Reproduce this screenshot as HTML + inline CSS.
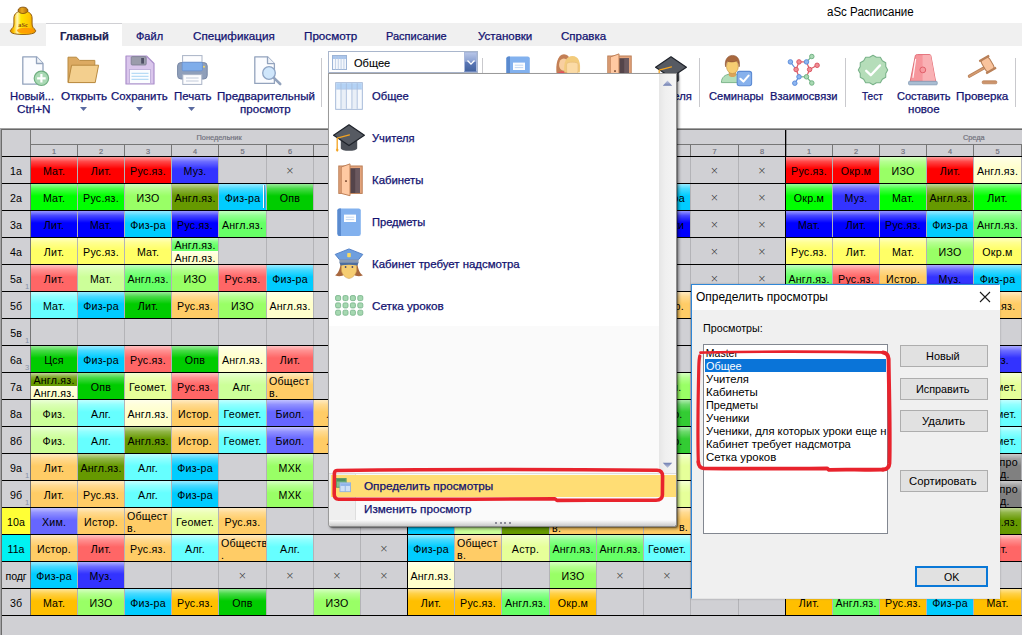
<!DOCTYPE html>
<html lang="ru"><head><meta charset="utf-8"><title>aSc Расписание</title>
<style>

html,body{margin:0;padding:0}
body{width:1022px;height:635px;overflow:hidden;position:relative;background:#d0d0d4;font-family:"Liberation Sans", sans-serif;}
.a{position:absolute}
.t{position:absolute;white-space:nowrap;transform-origin:0 50%;-webkit-text-stroke:.25px currentColor}
#grid{position:absolute;left:0;top:0;width:1022px;height:635px;font-size:10.67px;color:#000}
.c{position:absolute;height:26px;line-height:29px;letter-spacing:.22px;text-align:center;white-space:nowrap;overflow:hidden;
   background-image:linear-gradient(to bottom,rgba(255,255,255,.6) 0,rgba(255,255,255,.28) 18%,rgba(255,255,255,0) 46%);}
.c.l{text-align:left;line-height:12px;padding-left:2px;box-sizing:border-box}
.c.l span{display:block;position:relative;top:2px}
.h{position:absolute;height:13px;line-height:15px;letter-spacing:.22px;text-align:center;overflow:hidden;
   background-image:linear-gradient(to bottom,rgba(255,255,255,.6) 0,rgba(255,255,255,.2) 30%,rgba(255,255,255,0) 60%);}
.x{position:absolute;height:26px;line-height:27px;overflow:hidden;text-align:center;font-family:"DejaVu Sans Light","DejaVu Sans",sans-serif;font-weight:200;font-size:10.5px;color:#303030}
.rh{position:absolute;left:2px;width:28px;height:26px;line-height:28px;text-align:center}
.hl{position:absolute;height:1px;background:#000}
.vl{position:absolute;width:1px;background:#b3b3b7}
.sep{position:absolute;width:1px;background:#c9c9cd;top:58px;height:49px}
.btn{position:absolute;box-sizing:border-box;border:1px solid #adadad;background:#e1e1e1}

</style></head><body>
<div id="grid">
<div class="a" style="left:0;top:128px;width:1022px;height:1px;background:#a2a2a2"></div>
<div class="a" style="left:0;top:129px;width:1022px;height:1px;background:#696969"></div>
<div class="a" style="left:1px;top:128px;width:1px;height:506px;background:#6c6c6c;top:129px"></div>
<div class="a" style="left:0;top:128px;width:1px;height:507px;background:#a4a4a6"></div>
<div class="a" style="left:30px;top:144px;width:1022px;height:1px;background:#767676"></div>
<div class="vl" style="left:30px;top:130px;height:485px;background:#767676"></div>
<div class="vl" style="left:77px;top:145px;height:11px;background:#767676"></div>
<div class="vl" style="left:77px;top:157px;height:458px"></div>
<div class="vl" style="left:124px;top:145px;height:11px;background:#767676"></div>
<div class="vl" style="left:124px;top:157px;height:458px"></div>
<div class="vl" style="left:171px;top:145px;height:11px;background:#767676"></div>
<div class="vl" style="left:171px;top:157px;height:458px"></div>
<div class="vl" style="left:218px;top:145px;height:11px;background:#767676"></div>
<div class="vl" style="left:218px;top:157px;height:458px"></div>
<div class="vl" style="left:266px;top:145px;height:11px;background:#767676"></div>
<div class="vl" style="left:266px;top:157px;height:458px"></div>
<div class="vl" style="left:313px;top:145px;height:11px;background:#767676"></div>
<div class="vl" style="left:313px;top:157px;height:458px"></div>
<div class="vl" style="left:360px;top:145px;height:11px;background:#767676"></div>
<div class="vl" style="left:360px;top:157px;height:458px"></div>
<div class="a" style="left:407px;top:130px;width:1px;height:485px;background:#000"></div>
<div class="a" style="left:408px;top:130px;width:1px;height:485px;background:rgba(0,0,0,.3)"></div>
<div class="vl" style="left:454px;top:145px;height:11px;background:#767676"></div>
<div class="vl" style="left:454px;top:157px;height:458px"></div>
<div class="vl" style="left:501px;top:145px;height:11px;background:#767676"></div>
<div class="vl" style="left:501px;top:157px;height:458px"></div>
<div class="vl" style="left:549px;top:145px;height:11px;background:#767676"></div>
<div class="vl" style="left:549px;top:157px;height:458px"></div>
<div class="vl" style="left:596px;top:145px;height:11px;background:#767676"></div>
<div class="vl" style="left:596px;top:157px;height:458px"></div>
<div class="vl" style="left:643px;top:145px;height:11px;background:#767676"></div>
<div class="vl" style="left:643px;top:157px;height:458px"></div>
<div class="vl" style="left:690px;top:145px;height:11px;background:#767676"></div>
<div class="vl" style="left:690px;top:157px;height:458px"></div>
<div class="vl" style="left:738px;top:145px;height:11px;background:#767676"></div>
<div class="vl" style="left:738px;top:157px;height:458px"></div>
<div class="a" style="left:785px;top:130px;width:1px;height:485px;background:#000"></div>
<div class="a" style="left:786px;top:130px;width:1px;height:485px;background:rgba(0,0,0,.3)"></div>
<div class="vl" style="left:832px;top:145px;height:11px;background:#767676"></div>
<div class="vl" style="left:832px;top:157px;height:458px"></div>
<div class="vl" style="left:879px;top:145px;height:11px;background:#767676"></div>
<div class="vl" style="left:879px;top:157px;height:458px"></div>
<div class="vl" style="left:926px;top:145px;height:11px;background:#767676"></div>
<div class="vl" style="left:926px;top:157px;height:458px"></div>
<div class="vl" style="left:973px;top:145px;height:11px;background:#767676"></div>
<div class="vl" style="left:973px;top:157px;height:458px"></div>
<div class="vl" style="left:1021px;top:145px;height:11px;background:#767676"></div>
<div class="vl" style="left:1021px;top:157px;height:458px"></div>
<div class="hl" style="left:2px;top:156px;width:1022px"></div>
<div class="hl" style="left:2px;top:183px;width:1022px"></div>
<div class="hl" style="left:2px;top:210px;width:1022px"></div>
<div class="hl" style="left:2px;top:237px;width:1022px"></div>
<div class="hl" style="left:2px;top:264px;width:1022px"></div>
<div class="hl" style="left:2px;top:291px;width:1022px"></div>
<div class="hl" style="left:2px;top:318px;width:1022px"></div>
<div class="hl" style="left:2px;top:345px;width:1022px"></div>
<div class="hl" style="left:2px;top:372px;width:1022px"></div>
<div class="hl" style="left:2px;top:399px;width:1022px"></div>
<div class="hl" style="left:2px;top:426px;width:1022px"></div>
<div class="hl" style="left:2px;top:453px;width:1022px"></div>
<div class="hl" style="left:2px;top:480px;width:1022px"></div>
<div class="hl" style="left:2px;top:507px;width:1022px"></div>
<div class="hl" style="left:2px;top:534px;width:1022px"></div>
<div class="hl" style="left:2px;top:561px;width:1022px"></div>
<div class="hl" style="left:2px;top:588px;width:1022px"></div>
<div class="hl" style="left:2px;top:615px;width:1022px"></div>
<div class="rh" style="top:157px;">1а</div>
<div class="rh" style="top:184px;">2а</div>
<div class="rh" style="top:211px;">3а</div>
<div class="rh" style="top:238px;">4а</div>
<div class="rh" style="top:265px;">5а</div>
<div class="rh" style="top:292px;">5б</div>
<div class="rh" style="top:319px;">5в</div>
<div class="rh" style="top:346px;">6а</div>
<div class="rh" style="top:373px;">7а</div>
<div class="rh" style="top:400px;">8а</div>
<div class="rh" style="top:427px;">8б</div>
<div class="rh" style="top:454px;">9а</div>
<div class="rh" style="top:481px;">9б</div>
<div class="rh" style="top:508px;background:#ffff36;">10а</div>
<div class="rh" style="top:535px;background:#00f2f2;">11а</div>
<div class="rh" style="top:562px;letter-spacing:-.2px;">подг</div>
<div class="rh" style="top:589px;">3б</div>
<div class="a" style="left:25px;top:282px;font-size:7.6px;line-height:9px;color:#8790a6">1</div>
<div class="a" style="left:25px;top:336px;font-size:7.6px;line-height:9px;color:#8790a6">1</div>
<div class="a" style="left:25px;top:471px;font-size:7.6px;line-height:9px;color:#8790a6">1</div>
<div class="a" style="left:25px;top:498px;font-size:7.6px;line-height:9px;color:#8790a6">1</div>
<div class="a" style="left:25px;top:363px;font-size:7.6px;line-height:9px;color:#8790a6">3</div>
<div class="a" style="left:179.1px;width:80px;top:133px;text-align:center;font-size:7.4px;line-height:9px;color:#72727e;-webkit-text-stroke:.2px #72727e">Понедельник</div>
<div class="a" style="left:31px;width:46px;top:147px;text-align:center;font-size:7.4px;line-height:9px;color:#72727e;-webkit-text-stroke:.2px #72727e">1</div>
<div class="a" style="left:78px;width:46px;top:147px;text-align:center;font-size:7.4px;line-height:9px;color:#72727e;-webkit-text-stroke:.2px #72727e">2</div>
<div class="a" style="left:125px;width:46px;top:147px;text-align:center;font-size:7.4px;line-height:9px;color:#72727e;-webkit-text-stroke:.2px #72727e">3</div>
<div class="a" style="left:172px;width:46px;top:147px;text-align:center;font-size:7.4px;line-height:9px;color:#72727e;-webkit-text-stroke:.2px #72727e">4</div>
<div class="a" style="left:219px;width:47px;top:147px;text-align:center;font-size:7.4px;line-height:9px;color:#72727e;-webkit-text-stroke:.2px #72727e">5</div>
<div class="a" style="left:267px;width:46px;top:147px;text-align:center;font-size:7.4px;line-height:9px;color:#72727e;-webkit-text-stroke:.2px #72727e">6</div>
<div class="a" style="left:314px;width:46px;top:147px;text-align:center;font-size:7.4px;line-height:9px;color:#72727e;-webkit-text-stroke:.2px #72727e">7</div>
<div class="a" style="left:361px;width:46px;top:147px;text-align:center;font-size:7.4px;line-height:9px;color:#72727e;-webkit-text-stroke:.2px #72727e">8</div>
<div class="a" style="left:556.4px;width:80px;top:133px;text-align:center;font-size:7.4px;line-height:9px;color:#72727e;-webkit-text-stroke:.2px #72727e">Вторник</div>
<div class="a" style="left:408px;width:46px;top:147px;text-align:center;font-size:7.4px;line-height:9px;color:#72727e;-webkit-text-stroke:.2px #72727e">1</div>
<div class="a" style="left:455px;width:46px;top:147px;text-align:center;font-size:7.4px;line-height:9px;color:#72727e;-webkit-text-stroke:.2px #72727e">2</div>
<div class="a" style="left:502px;width:47px;top:147px;text-align:center;font-size:7.4px;line-height:9px;color:#72727e;-webkit-text-stroke:.2px #72727e">3</div>
<div class="a" style="left:550px;width:46px;top:147px;text-align:center;font-size:7.4px;line-height:9px;color:#72727e;-webkit-text-stroke:.2px #72727e">4</div>
<div class="a" style="left:597px;width:46px;top:147px;text-align:center;font-size:7.4px;line-height:9px;color:#72727e;-webkit-text-stroke:.2px #72727e">5</div>
<div class="a" style="left:644px;width:46px;top:147px;text-align:center;font-size:7.4px;line-height:9px;color:#72727e;-webkit-text-stroke:.2px #72727e">6</div>
<div class="a" style="left:691px;width:47px;top:147px;text-align:center;font-size:7.4px;line-height:9px;color:#72727e;-webkit-text-stroke:.2px #72727e">7</div>
<div class="a" style="left:739px;width:46px;top:147px;text-align:center;font-size:7.4px;line-height:9px;color:#72727e;-webkit-text-stroke:.2px #72727e">8</div>
<div class="a" style="left:933.8px;width:80px;top:133px;text-align:center;font-size:7.4px;line-height:9px;color:#72727e;-webkit-text-stroke:.2px #72727e">Среда</div>
<div class="a" style="left:786px;width:46px;top:147px;text-align:center;font-size:7.4px;line-height:9px;color:#72727e;-webkit-text-stroke:.2px #72727e">1</div>
<div class="a" style="left:833px;width:46px;top:147px;text-align:center;font-size:7.4px;line-height:9px;color:#72727e;-webkit-text-stroke:.2px #72727e">2</div>
<div class="a" style="left:880px;width:46px;top:147px;text-align:center;font-size:7.4px;line-height:9px;color:#72727e;-webkit-text-stroke:.2px #72727e">3</div>
<div class="a" style="left:927px;width:46px;top:147px;text-align:center;font-size:7.4px;line-height:9px;color:#72727e;-webkit-text-stroke:.2px #72727e">4</div>
<div class="a" style="left:974px;width:47px;top:147px;text-align:center;font-size:7.4px;line-height:9px;color:#72727e;-webkit-text-stroke:.2px #72727e">5</div>
<div class="c" style="left:31px;top:157px;width:46px;background-color:#ff0000">Мат.</div>
<div class="c" style="left:78px;top:157px;width:46px;background-color:#ff0000">Лит.</div>
<div class="c" style="left:125px;top:157px;width:46px;background-color:#ff0000">Рус.яз.</div>
<div class="c" style="left:172px;top:157px;width:46px;background-color:#3333ff">Муз.</div>
<div class="x" style="left:267px;top:157px;width:46px">×</div>
<div class="x" style="left:691px;top:157px;width:47px">×</div>
<div class="x" style="left:739px;top:157px;width:46px">×</div>
<div class="c" style="left:786px;top:157px;width:46px;background-color:#ff0000">Рус.яз.</div>
<div class="c" style="left:833px;top:157px;width:46px;background-color:#ff0000">Окр.м</div>
<div class="c" style="left:880px;top:157px;width:46px;background-color:#99ff66">ИЗО</div>
<div class="c" style="left:927px;top:157px;width:46px;background-color:#ff0000">Лит.</div>
<div class="c" style="left:974px;top:157px;width:47px;background-color:#ffffcc">Англ.яз.</div>
<div class="c" style="left:31px;top:184px;width:46px;background-color:#00ff00">Мат.</div>
<div class="c" style="left:78px;top:184px;width:46px;background-color:#00ff00">Рус.яз.</div>
<div class="c" style="left:125px;top:184px;width:46px;background-color:#99ff66">ИЗО</div>
<div class="c" style="left:172px;top:184px;width:46px;background-color:#669900">Англ.яз.</div>
<div class="c" style="left:219px;top:184px;width:47px;background-color:#00ccff">Физ-ра</div>
<div class="c" style="left:267px;top:184px;width:46px;background-color:#00cc00">Опв</div>
<div class="c" style="left:644px;top:184px;width:46px;background-color:#00ccff">Физ-ра</div>
<div class="x" style="left:691px;top:184px;width:47px">×</div>
<div class="x" style="left:739px;top:184px;width:46px">×</div>
<div class="c" style="left:786px;top:184px;width:46px;background-color:#00ff00">Окр.м</div>
<div class="c" style="left:833px;top:184px;width:46px;background-color:#3333ff">Муз.</div>
<div class="c" style="left:880px;top:184px;width:46px;background-color:#00ff00">Мат.</div>
<div class="c" style="left:927px;top:184px;width:46px;background-color:#669900">Англ.яз.</div>
<div class="c" style="left:974px;top:184px;width:47px;background-color:#00ff00">Лит.</div>
<div class="c" style="left:31px;top:211px;width:46px;background-color:#0000ff">Лит.</div>
<div class="c" style="left:78px;top:211px;width:46px;background-color:#0000ff">Мат.</div>
<div class="c" style="left:125px;top:211px;width:46px;background-color:#00ccff">Физ-ра</div>
<div class="c" style="left:172px;top:211px;width:46px;background-color:#0000ff">Рус.яз.</div>
<div class="c" style="left:219px;top:211px;width:47px;background-color:#66ff66">Англ.яз.</div>
<div class="c" style="left:644px;top:211px;width:46px;background-color:#0000ff">Физ-ки</div>
<div class="x" style="left:691px;top:211px;width:47px">×</div>
<div class="x" style="left:739px;top:211px;width:46px">×</div>
<div class="c" style="left:786px;top:211px;width:46px;background-color:#0000ff">Мат.</div>
<div class="c" style="left:833px;top:211px;width:46px;background-color:#0000ff">Лит.</div>
<div class="c" style="left:880px;top:211px;width:46px;background-color:#0000ff">Рус.яз.</div>
<div class="c" style="left:927px;top:211px;width:46px;background-color:#00ccff">Физ-ра</div>
<div class="c" style="left:974px;top:211px;width:47px;background-color:#66ff66">Англ.яз.</div>
<div class="c" style="left:31px;top:238px;width:46px;background-color:#ffff66">Лит.</div>
<div class="c" style="left:78px;top:238px;width:46px;background-color:#ffff66">Рус.яз.</div>
<div class="c" style="left:125px;top:238px;width:46px;background-color:#ffff66">Мат.</div>
<div class="h" style="left:172px;top:238px;width:46px;background-color:#66ff66">Англ.яз.</div>
<div class="h" style="left:172px;top:251px;width:46px;background-color:#ffffcc">Англ.яз.</div>
<div class="x" style="left:691px;top:238px;width:47px">×</div>
<div class="x" style="left:739px;top:238px;width:46px">×</div>
<div class="c" style="left:786px;top:238px;width:46px;background-color:#ffff66">Рус.яз.</div>
<div class="c" style="left:833px;top:238px;width:46px;background-color:#ffff66">Лит.</div>
<div class="c" style="left:880px;top:238px;width:46px;background-color:#ffff66">Мат.</div>
<div class="c" style="left:927px;top:238px;width:46px;background-color:#99ff66">ИЗО</div>
<div class="c" style="left:974px;top:238px;width:47px;background-color:#ffff66">Окр.м</div>
<div class="c" style="left:31px;top:265px;width:46px;background-color:#ff6666">Лит.</div>
<div class="c" style="left:78px;top:265px;width:46px;background-color:#ccff99">Мат.</div>
<div class="c" style="left:125px;top:265px;width:46px;background-color:#66ff66">Англ.яз.</div>
<div class="c" style="left:172px;top:265px;width:46px;background-color:#99ff66">ИЗО</div>
<div class="c" style="left:219px;top:265px;width:47px;background-color:#ff6666">Рус.яз.</div>
<div class="c" style="left:267px;top:265px;width:46px;background-color:#00ccff">Физ-ра</div>
<div class="x" style="left:691px;top:265px;width:47px">×</div>
<div class="x" style="left:739px;top:265px;width:46px">×</div>
<div class="c" style="left:786px;top:265px;width:46px;background-color:#66ff66">Англ.яз.</div>
<div class="c" style="left:833px;top:265px;width:46px;background-color:#ff6666">Рус.яз.</div>
<div class="c" style="left:880px;top:265px;width:46px;background-color:#ffcc66">Истор.</div>
<div class="c" style="left:927px;top:265px;width:46px;background-color:#3333ff">Муз.</div>
<div class="c" style="left:974px;top:265px;width:47px;background-color:#00ccff">Физ-ра</div>
<div class="c" style="left:31px;top:292px;width:46px;background-color:#66ffff">Мат.</div>
<div class="c" style="left:78px;top:292px;width:46px;background-color:#00ccff">Физ-ра</div>
<div class="c" style="left:125px;top:292px;width:46px;background-color:#00cc00">Лит.</div>
<div class="c" style="left:172px;top:292px;width:46px;background-color:#ffcc66">Рус.яз.</div>
<div class="c" style="left:219px;top:292px;width:47px;background-color:#99ff66">ИЗО</div>
<div class="c" style="left:267px;top:292px;width:46px;background-color:#ffffcc">Англ.яз.</div>
<div class="c" style="left:644px;top:292px;width:46px;background-color:#ffcc66">Истор.</div>
<div class="c" style="left:974px;top:292px;width:47px;background-color:#ffcc66">Рус.яз.</div>
<div class="c" style="left:31px;top:346px;width:46px;background-color:#00cc00">Цся</div>
<div class="c" style="left:78px;top:346px;width:46px;background-color:#00ccff">Физ-ра</div>
<div class="c" style="left:125px;top:346px;width:46px;background-color:#ff6666">Рус.яз.</div>
<div class="c" style="left:172px;top:346px;width:46px;background-color:#00cc00">Опв</div>
<div class="c" style="left:219px;top:346px;width:47px;background-color:#ffffcc">Англ.яз.</div>
<div class="c" style="left:267px;top:346px;width:46px;background-color:#ff6666">Лит.</div>
<div class="c" style="left:974px;top:346px;width:47px;background-color:#3333ff">Муз.</div>
<div class="h" style="left:31px;top:373px;width:46px;background-color:#669900">Англ.яз.</div>
<div class="h" style="left:31px;top:386px;width:46px;background-color:#ffffcc">Англ.яз.</div>
<div class="c" style="left:78px;top:373px;width:46px;background-color:#00cc00">Опв</div>
<div class="c" style="left:125px;top:373px;width:46px;background-color:#e6ff99">Геомет.</div>
<div class="c" style="left:172px;top:373px;width:46px;background-color:#ff6666">Рус.яз.</div>
<div class="c" style="left:219px;top:373px;width:47px;background-color:#ccff99">Алг.</div>
<div class="c l" style="left:267px;top:373px;width:46px;background-color:#ffcc66"><span>Общест<br>в.</span></div>
<div class="c" style="left:644px;top:373px;width:46px;background-color:#99ff66">Биол.</div>
<div class="c" style="left:974px;top:373px;width:47px;background-color:#e6ff99">Геомет.</div>
<div class="c" style="left:31px;top:400px;width:46px;background-color:#ccff99">Физ.</div>
<div class="c" style="left:78px;top:400px;width:46px;background-color:#66ffff">Алг.</div>
<div class="c" style="left:125px;top:400px;width:46px;background-color:#ffffcc">Англ.яз.</div>
<div class="c" style="left:172px;top:400px;width:46px;background-color:#ffcc66">Истор.</div>
<div class="c" style="left:219px;top:400px;width:47px;background-color:#66ffff">Геомет.</div>
<div class="c" style="left:267px;top:400px;width:46px;background-color:#6666ff">Биол.</div>
<div class="c" style="left:314px;top:400px;width:46px;background-color:#ffcc66">Лит.</div>
<div class="c" style="left:644px;top:400px;width:46px;background-color:#33cc33">Геогр.</div>
<div class="c" style="left:974px;top:400px;width:47px;background-color:#66ffff">Геомет.</div>
<div class="c" style="left:31px;top:427px;width:46px;background-color:#ccff99">Физ.</div>
<div class="c" style="left:78px;top:427px;width:46px;background-color:#66ffff">Алг.</div>
<div class="c" style="left:125px;top:427px;width:46px;background-color:#669900">Англ.яз.</div>
<div class="c" style="left:172px;top:427px;width:46px;background-color:#ffcc66">Истор.</div>
<div class="c" style="left:219px;top:427px;width:47px;background-color:#66ffff">Геомет.</div>
<div class="c" style="left:267px;top:427px;width:46px;background-color:#6666ff">Биол.</div>
<div class="c" style="left:314px;top:427px;width:46px;background-color:#ffcc66">Лит.</div>
<div class="c" style="left:644px;top:427px;width:46px;background-color:#33cc33">Геогр.</div>
<div class="c" style="left:974px;top:427px;width:47px;background-color:#66ffff">Геомет.</div>
<div class="c" style="left:31px;top:454px;width:46px;background-color:#ffcc66">Лит.</div>
<div class="c" style="left:78px;top:454px;width:46px;background-color:#669900">Англ.яз.</div>
<div class="c" style="left:125px;top:454px;width:46px;background-color:#66ffff">Алг.</div>
<div class="c" style="left:172px;top:454px;width:46px;background-color:#00ccff">Физ-ра</div>
<div class="c" style="left:267px;top:454px;width:46px;background-color:#99ff66">МХК</div>
<div class="c" style="left:644px;top:454px;width:46px;background-color:#e6ff99"></div>
<div class="c l" style="left:974px;top:454px;width:47px;background-color:#808080"><span>Инд,про<br><i style="font-style:normal;padding-left:24px">д.</i></span></div>
<div class="c" style="left:31px;top:481px;width:46px;background-color:#ffcc66">Лит.</div>
<div class="c" style="left:78px;top:481px;width:46px;background-color:#ffcc66">Рус.яз.</div>
<div class="c" style="left:125px;top:481px;width:46px;background-color:#66ffff">Алг.</div>
<div class="c" style="left:172px;top:481px;width:46px;background-color:#00ccff">Физ-ра</div>
<div class="c" style="left:267px;top:481px;width:46px;background-color:#99ff66">МХК</div>
<div class="c" style="left:644px;top:481px;width:46px;background-color:#e6ff99"></div>
<div class="c l" style="left:974px;top:481px;width:47px;background-color:#808080"><span>Инд,про<br><i style="font-style:normal;padding-left:24px">д.</i></span></div>
<div class="c" style="left:31px;top:508px;width:46px;background-color:#6666ff">Хим.</div>
<div class="c" style="left:78px;top:508px;width:46px;background-color:#ffcc66">Истор.</div>
<div class="c l" style="left:125px;top:508px;width:46px;background-color:#ffcc66"><span>Общест<br>в.</span></div>
<div class="c" style="left:172px;top:508px;width:46px;background-color:#e6ff99">Геомет.</div>
<div class="c" style="left:219px;top:508px;width:47px;background-color:#ffcc66">Рус.яз.</div>
<div class="c" style="left:408px;top:508px;width:46px;background-color:#00ccff"></div>
<div class="c" style="left:455px;top:508px;width:46px;background-color:#ccff99"></div>
<div class="c" style="left:502px;top:508px;width:47px;background-color:#669900"></div>
<div class="c l" style="left:550px;top:508px;width:46px;background-color:#ffcc66"><span>Общест<br>в.</span></div>
<div class="c" style="left:597px;top:508px;width:46px;background-color:#ffcc66"></div>
<div class="c" style="left:644px;top:508px;width:46px;background-color:#ffcc66;text-align:right;padding-right:2px;box-sizing:border-box;line-height:39px">в.</div>
<div class="c" style="left:974px;top:508px;width:47px;background-color:#669900">Англ.яз.</div>
<div class="c" style="left:31px;top:535px;width:46px;background-color:#ffcc66">Истор.</div>
<div class="c" style="left:78px;top:535px;width:46px;background-color:#ff6666">Лит.</div>
<div class="c" style="left:125px;top:535px;width:46px;background-color:#ffcc66">Рус.яз.</div>
<div class="c" style="left:172px;top:535px;width:46px;background-color:#66ffff">Алг.</div>
<div class="c l" style="left:219px;top:535px;width:47px;background-color:#ffcc66"><span>Обществ<br>.</span></div>
<div class="c" style="left:267px;top:535px;width:46px;background-color:#66ffff">Алг.</div>
<div class="x" style="left:361px;top:535px;width:46px">×</div>
<div class="c" style="left:408px;top:535px;width:46px;background-color:#00ccff">Физ-ра</div>
<div class="c l" style="left:455px;top:535px;width:46px;background-color:#ffcc66"><span>Общест<br>в.</span></div>
<div class="c" style="left:502px;top:535px;width:47px;background-color:#e6ff99">Астр.</div>
<div class="c" style="left:550px;top:535px;width:46px;background-color:#66ff66">Англ.яз.</div>
<div class="c" style="left:597px;top:535px;width:46px;background-color:#66ff66">Англ.яз.</div>
<div class="c" style="left:644px;top:535px;width:46px;background-color:#66ffff">Геомет.</div>
<div class="c" style="left:974px;top:535px;width:47px;background-color:#ff6666">Лит.</div>
<div class="c" style="left:31px;top:562px;width:46px;background-color:#00ccff">Физ-ра</div>
<div class="c" style="left:78px;top:562px;width:46px;background-color:#3333ff">Муз.</div>
<div class="x" style="left:219px;top:562px;width:47px">×</div>
<div class="x" style="left:267px;top:562px;width:46px">×</div>
<div class="x" style="left:314px;top:562px;width:46px">×</div>
<div class="x" style="left:361px;top:562px;width:46px">×</div>
<div class="c" style="left:408px;top:562px;width:46px;background-color:#ffffcc">Англ.яз.</div>
<div class="c" style="left:550px;top:562px;width:46px;background-color:#99ff66">ИЗО</div>
<div class="x" style="left:597px;top:562px;width:46px">×</div>
<div class="x" style="left:644px;top:562px;width:46px">×</div>
<div class="c" style="left:31px;top:589px;width:46px;background-color:#ffbf00">Мат.</div>
<div class="c" style="left:78px;top:589px;width:46px;background-color:#99ff66">ИЗО</div>
<div class="c" style="left:125px;top:589px;width:46px;background-color:#00ccff">Физ-ра</div>
<div class="c" style="left:172px;top:589px;width:46px;background-color:#ffbf00">Рус.яз.</div>
<div class="c" style="left:219px;top:589px;width:47px;background-color:#00cc00">Опв</div>
<div class="c" style="left:314px;top:589px;width:46px;background-color:#99ff66">ИЗО</div>
<div class="c" style="left:408px;top:589px;width:46px;background-color:#ffbf00">Лит.</div>
<div class="c" style="left:455px;top:589px;width:46px;background-color:#ffbf00">Рус.яз.</div>
<div class="c" style="left:502px;top:589px;width:47px;background-color:#66ff66">Англ.яз.</div>
<div class="c" style="left:550px;top:589px;width:46px;background-color:#ffbf00">Окр.м</div>
<div class="c" style="left:786px;top:589px;width:46px;background-color:#ffbf00">Лит.</div>
<div class="c" style="left:833px;top:589px;width:46px;background-color:#66ff66">Англ.яз.</div>
<div class="c" style="left:880px;top:589px;width:46px;background-color:#ffbf00">Рус.яз.</div>
<div class="c" style="left:927px;top:589px;width:46px;background-color:#00ccff">Физ-ра</div>
<div class="c" style="left:974px;top:589px;width:47px;background-color:#ffbf00">Мат.</div>
<div class="a" style="left:263px;top:185px;width:1px;height:23px;background:#fff"></div>
<div class="a" style="left:264px;top:185px;width:1px;height:23px;background:rgba(90,110,130,.55)"></div>
</div>
<div class="a" style="left:0;top:0;width:1022px;height:23px;background:#fff"></div>
<div class="a" style="left:0;top:23px;width:1022px;height:23px;background:#f0f0f0"></div>
<div class="a" style="left:0;top:46px;width:1022px;height:82px;background:#fff"></div>
<div class="a" style="left:46px;top:23px;width:76px;height:24px;background:#fff;border-top:1px solid #d0d0d4;box-sizing:border-box"></div>
<span class="t" id="t0" style="left:827.0px;top:3.5px;font-size:12px;line-height:16px;color:#000;font-weight:normal;transform:scaleX(0.9611);-webkit-text-stroke:0;">aSc Расписание</span>
<span class="t" id="t1" style="left:60.0px;top:29.0px;font-size:11px;line-height:14px;color:#1a2050;font-weight:bold;transform:scaleX(1.0104);">Главный</span>
<span class="t" id="t2" style="left:136.0px;top:29.0px;font-size:11px;line-height:14px;color:#121270;font-weight:normal;transform:scaleX(1.0000);">Файл</span>
<span class="t" id="t3" style="left:192.5px;top:29.0px;font-size:11px;line-height:14px;color:#121270;font-weight:normal;transform:scaleX(1.0584);">Спецификация</span>
<span class="t" id="t4" style="left:303.5px;top:29.0px;font-size:11px;line-height:14px;color:#121270;font-weight:normal;transform:scaleX(1.0600);">Просмотр</span>
<span class="t" id="t5" style="left:386.0px;top:29.0px;font-size:11px;line-height:14px;color:#121270;font-weight:normal;transform:scaleX(1.0000);">Расписание</span>
<span class="t" id="t6" style="left:477.5px;top:29.0px;font-size:11px;line-height:14px;color:#121270;font-weight:normal;transform:scaleX(1.0481);">Установки</span>
<span class="t" id="t7" style="left:561.0px;top:29.0px;font-size:11px;line-height:14px;color:#121270;font-weight:normal;transform:scaleX(1.0465);">Справка</span>
<span class="t" id="t8" style="left:10.0px;top:89.0px;font-size:11px;line-height:14px;color:#121270;font-weight:normal;transform:scaleX(1.0233);">Новый...</span>
<span class="t" id="t9" style="left:17.0px;top:102.0px;font-size:11px;line-height:14px;color:#121270;font-weight:normal;transform:scaleX(1.0645);">Ctrl+N</span>
<span class="t" id="t10" style="left:60.5px;top:89.0px;font-size:11px;line-height:14px;color:#121270;font-weight:normal;transform:scaleX(1.0698);">Открыть</span>
<span class="t" id="t11" style="left:111.0px;top:89.0px;font-size:11px;line-height:14px;color:#121270;font-weight:normal;transform:scaleX(1.0364);">Сохранить</span>
<span class="t" id="t12" style="left:173.5px;top:89.0px;font-size:11px;line-height:14px;color:#121270;font-weight:normal;transform:scaleX(1.0417);">Печать</span>
<span class="t" id="t13" style="left:216.5px;top:89.0px;font-size:11px;line-height:14px;color:#121270;font-weight:normal;transform:scaleX(1.0484);">Предварительный</span>
<span class="t" id="t14" style="left:240.0px;top:102.0px;font-size:11px;line-height:14px;color:#121270;font-weight:normal;transform:scaleX(1.0521);">просмотр</span>
<span class="t" id="t15" style="left:649.0px;top:89.0px;font-size:11px;line-height:14px;color:#121270;font-weight:normal;transform:scaleX(1.0238);">Учителя</span>
<span class="t" id="t16" style="left:708.7px;top:89.0px;font-size:11px;line-height:14px;color:#121270;font-weight:normal;transform:scaleX(1.0111);">Семинары</span>
<span class="t" id="t17" style="left:769.5px;top:89.0px;font-size:11px;line-height:14px;color:#121270;font-weight:normal;transform:scaleX(1.0119);">Взаимосвязи</span>
<span class="t" id="t18" style="left:862.0px;top:89.0px;font-size:11px;line-height:14px;color:#121270;font-weight:normal;transform:scaleX(0.9130);">Тест</span>
<span class="t" id="t19" style="left:896.6px;top:89.0px;font-size:11px;line-height:14px;color:#121270;font-weight:normal;transform:scaleX(1.0038);">Составить</span>
<span class="t" id="t20" style="left:907.5px;top:102.0px;font-size:11px;line-height:14px;color:#121270;font-weight:normal;transform:scaleX(1.0500);">новое</span>
<span class="t" id="t21" style="left:955.6px;top:89.0px;font-size:11px;line-height:14px;color:#121270;font-weight:normal;transform:scaleX(1.0612);">Проверка</span>
<svg class="a" style="left:80px;top:107px" width="7" height="4"><path d="M0 0h7L3.5 4z" fill="#5a6aa0"/></svg>
<svg class="a" style="left:136px;top:107px" width="7" height="4"><path d="M0 0h7L3.5 4z" fill="#5a6aa0"/></svg>
<svg class="a" style="left:188px;top:107px" width="7" height="4"><path d="M0 0h7L3.5 4z" fill="#5a6aa0"/></svg>
<div class="sep" style="left:321px"></div>
<div class="sep" style="left:482px"></div>
<div class="sep" style="left:699px"></div>
<div class="sep" style="left:845px"></div>
<div class="sep" style="left:1015px"></div>
<svg class="a" style="left:9px;top:5px" width="28" height="31" viewBox="0 0 28 31">
<defs><linearGradient id="bg1" x1="0" y1="0" x2="1" y2="0"><stop offset="0" stop-color="#d88600"/><stop offset=".14" stop-color="#ffc800"/><stop offset=".27" stop-color="#fff6b8"/><stop offset=".42" stop-color="#ffe400"/><stop offset=".75" stop-color="#ffc600"/><stop offset="1" stop-color="#e08a00"/></linearGradient>
<linearGradient id="bg2" x1="0" y1="0" x2="1" y2="0"><stop offset="0" stop-color="#b87408"/><stop offset=".4" stop-color="#e8a820"/><stop offset="1" stop-color="#b06a06"/></linearGradient></defs>
<path d="M14 6 C8.5 6 5 8.5 4.9 13 L4.9 19 C4.9 22 3.2 23.4 1.9 24.6 C.9 25.6 1.2 27.4 3.4 28.2 C8 29.9 20 29.9 24.6 28.2 C26.8 27.4 27.1 25.6 26.1 24.6 C24.8 23.4 23.1 22 23.1 19 L23.1 13 C23 8.5 19.5 6 14 6Z" fill="url(#bg1)" stroke="#8a5208" stroke-width=".9"/>
<ellipse cx="16.5" cy="25.6" rx="8.6" ry="2.9" fill="#ff9500" opacity=".85"/>
<ellipse cx="14" cy="5.3" rx="4.9" ry="3.2" fill="url(#bg2)" stroke="#7a4a0c" stroke-width=".8"/>
<text x="14" y="22.2" text-anchor="middle" font-family="Liberation Serif, serif" font-size="6.2" font-weight="bold" fill="#8a4a10">aSc</text>
</svg>
<svg class="a" style="left:21px;top:55px" width="30" height="32" viewBox="0 0 30 32">
<path d="M1.8 1.8H15.5L22 8.5V29.2H1.8Z" fill="#fbfcff" stroke="#93a3bd" stroke-width="1.3" stroke-linejoin="round"/>
<path d="M15.5 1.8V8.5H22" fill="#eef2f8" stroke="#93a3bd" stroke-width="1.3" stroke-linejoin="round"/>
<circle cx="20.4" cy="23.3" r="7.2" fill="#a9d9b4" stroke="#6fae80" stroke-width="1.2"/>
<path d="M20.4 19V27.6M16.1 23.3H24.7" stroke="#fff" stroke-width="2.2"/>
</svg>
<svg class="a" style="left:66px;top:55px" width="35" height="30" viewBox="0 0 35 30">
<path d="M2 2.2H10.5L13.5 5.4H28.8V27.4H2Z" fill="#dcaa62" stroke="#b98a40" stroke-width="1"/>
<path d="M5.6 10.2H32.6L29.2 27.6H2.2Z" fill="#f3cf8e" stroke="#b98a40" stroke-width="1" stroke-linejoin="round"/>
</svg>
<svg class="a" style="left:124px;top:54px" width="32" height="32" viewBox="0 0 32 32">
<path d="M2 2H22.5L30 9.5V30H2Z" fill="#dac6ec" stroke="#ab8fcb" stroke-width="1.2" stroke-linejoin="round"/>
<rect x="7.2" y="2.6" width="15" height="8.4" rx="1" fill="#9b9cab" stroke="#7b7c90" stroke-width=".8"/>
<rect x="17.2" y="4" width="2.8" height="5.6" fill="#4e4f64"/>
<rect x="5.5" y="15.5" width="21" height="14" fill="#fbfdff" stroke="#b9a6d4" stroke-width=".8"/>
<path d="M7.5 19.4H24.5M7.5 22.4H24.5M7.5 25.4H24.5" stroke="#b8dcf6" stroke-width="1.1"/>
</svg>
<svg class="a" style="left:176px;top:54px" width="33" height="32" viewBox="0 0 33 32">
<rect x="6.6" y="1.6" width="19.4" height="9" fill="#fdfdfe" stroke="#a9b3c6" stroke-width="1"/>
<rect x="1.6" y="8.6" width="29.6" height="16.4" rx="3.4" fill="#8f9fba" stroke="#7888a6" stroke-width="1"/>
<rect x="6.2" y="8.2" width="20.2" height="8.6" rx="1.2" fill="#7fadea" stroke="#6a92d2" stroke-width=".8"/>
<circle cx="28" cy="12.8" r="1" fill="#f6d860"/>
<rect x="6.8" y="20.6" width="19" height="9.8" fill="#fdfdfe" stroke="#a9b3c6" stroke-width="1"/>
<path d="M10 24H22.6M10 27H22.6" stroke="#c4ccda" stroke-width="1.1"/>
</svg>
<svg class="a" style="left:253px;top:55px" width="30" height="31" viewBox="0 0 30 31">
<path d="M1.8 1.8H14.5L21.4 8.6V28.4H1.8Z" fill="#fbfcff" stroke="#93a3bd" stroke-width="1.3" stroke-linejoin="round"/>
<path d="M14.5 1.8V8.6H21.4" fill="#eef2f8" stroke="#93a3bd" stroke-width="1.3" stroke-linejoin="round"/>
<path d="M20.6 22.6L27.2 29" stroke="#93a3bd" stroke-width="2.6" stroke-linecap="round"/>
<circle cx="16" cy="18" r="6.3" fill="#cfe6fb" stroke="#8ea4c4" stroke-width="1.3"/>
</svg>
<svg class="a" style="left:720px;top:54px" width="34" height="33" viewBox="0 0 34 33">
<path d="M1.4 28.6C1.4 23 5.5 20.6 9.5 20.2H15.5C19.5 20.6 23.4 23 23.4 28.6Z" fill="#b2deba" stroke="#7db58c" stroke-width="1"/>
<path d="M8.8 17.5H16V21.4C14.5 23.4 10.4 23.4 8.8 21.4Z" fill="#d9a35a"/>
<ellipse cx="12.4" cy="12.4" rx="5.9" ry="7.2" fill="#f6cd72" stroke="#c89848" stroke-width=".7"/>
<path d="M5.6 12.8C4.2 5.5 8 1.4 12.4 1.4C17.6 1.4 20.4 5.8 19.2 12.8C18.9 9.6 17.8 7.8 16.4 6.9C13.6 8.4 9.2 8 7.6 7.2C6.4 8.4 5.9 10.4 5.6 12.8Z" fill="#a8683e" stroke="#8c5230" stroke-width=".6"/>
<rect x="17.2" y="17.4" width="14.4" height="14.4" rx="2.2" fill="#87b1ec" stroke="#5c8bd4" stroke-width="1.1"/>
<path d="M20.4 24.8L23.4 27.6L28.6 21.6" fill="none" stroke="#fff" stroke-width="2.1" stroke-linecap="round" stroke-linejoin="round"/>
</svg>
<svg class="a" style="left:786px;top:52px" width="36" height="36" viewBox="0 0 36 36"><path d="M4.4 9.9L10.1 17.5" stroke="#5f8fdc" stroke-width="1.2"/><path d="M13.0 9.9L10.1 17.5" stroke="#dc5a66" stroke-width="1.2"/><path d="M13.0 9.9L20.5 9.9" stroke="#dc5a66" stroke-width="1.2"/><path d="M20.5 9.9L25.8 4.5" stroke="#74b486" stroke-width="1.2"/><path d="M20.5 9.9L23.6 17.5" stroke="#dc5a66" stroke-width="1.2"/><path d="M23.6 17.5L31.1 13.3" stroke="#dc5a66" stroke-width="1.2"/><path d="M10.1 17.5L13.0 24.8" stroke="#dc5a66" stroke-width="1.2"/><path d="M13.0 24.8L20.5 24.8" stroke="#74b486" stroke-width="1.2"/><path d="M20.5 24.8L23.6 17.5" stroke="#dc5a66" stroke-width="1.2"/><path d="M13.0 24.8L8.8 31.2" stroke="#5f8fdc" stroke-width="1.2"/><path d="M20.5 24.8L25.8 31.0" stroke="#74b486" stroke-width="1.2"/><circle cx="4.4" cy="9.9" r="2.25" fill="#8db6f0" stroke="#5f8fdc" stroke-width="1"/><circle cx="13.0" cy="9.9" r="2.25" fill="#f08c94" stroke="#dc5a66" stroke-width="1"/><circle cx="20.5" cy="9.9" r="2.25" fill="#8db6f0" stroke="#5f8fdc" stroke-width="1"/><circle cx="25.8" cy="4.5" r="2.25" fill="#a9d9b3" stroke="#74b486" stroke-width="1"/><circle cx="31.1" cy="13.3" r="2.25" fill="#f08c94" stroke="#dc5a66" stroke-width="1"/><circle cx="10.1" cy="17.5" r="2.25" fill="#f08c94" stroke="#dc5a66" stroke-width="1"/><circle cx="23.6" cy="17.5" r="2.25" fill="#f08c94" stroke="#dc5a66" stroke-width="1"/><circle cx="13.0" cy="24.8" r="2.25" fill="#8db6f0" stroke="#5f8fdc" stroke-width="1"/><circle cx="20.5" cy="24.8" r="2.25" fill="#a9d9b3" stroke="#74b486" stroke-width="1"/><circle cx="8.8" cy="31.2" r="2.25" fill="#8db6f0" stroke="#5f8fdc" stroke-width="1"/><circle cx="25.8" cy="31.0" r="2.25" fill="#a9d9b3" stroke="#74b486" stroke-width="1"/></svg>
<svg class="a" style="left:857px;top:54px" width="32" height="32" viewBox="0 0 32 32">
<path d="M16.00 1.30L19.42 3.25L23.35 3.27L25.33 6.67L28.73 8.65L28.75 12.58L30.70 16.00L28.75 19.42L28.73 23.35L25.33 25.33L23.35 28.73L19.42 28.75L16.00 30.70L12.58 28.75L8.65 28.73L6.67 25.33L3.27 23.35L3.25 19.42L1.30 16.00L3.25 12.58L3.27 8.65L6.67 6.67L8.65 3.27L12.58 3.25Z" fill="#b5ddb9" stroke="#79b289" stroke-width="1.1" stroke-linejoin="round"/>
<path d="M9.2 16.8L13.8 21.2L23 11.4" fill="none" stroke="#fff" stroke-width="2.3" stroke-linecap="round" stroke-linejoin="round"/>
</svg>
<svg class="a" style="left:907px;top:53px" width="32" height="33" viewBox="0 0 32 33">
<path d="M8.4 2.4Q9 1.6 10.4 1.6H22Q23.4 1.6 23.8 2.4L28.6 28.4H3.2Z" fill="#f6969c" stroke="#e36f78" stroke-width="1"/>
<path d="M15.6 1.9H22Q23.4 1.8 23.8 2.6L28.4 28.2H15.6Z" fill="#f9b1b4"/>
<path d="M8.6 6.4L6 24.4" stroke="#fff" stroke-width="1.2" stroke-linecap="round" opacity=".9"/>
<circle cx="15.8" cy="16.9" r="2.9" fill="#f79aa0" stroke="#e0606a" stroke-width="1"/>
<rect x="1.6" y="28.3" width="28.6" height="3.5" rx=".8" fill="#a9bdd2" stroke="#8299b4" stroke-width=".8"/>
</svg>
<svg class="a" style="left:966px;top:53px" width="34" height="33" viewBox="0 0 34 33">
<path d="M3.4 23.2L17.6 15.2" stroke="#b98058" stroke-width="3.2" stroke-linecap="round"/>
<path d="M3.4 23.2L17.6 15.2" stroke="#d29a70" stroke-width="1.6" stroke-linecap="round"/>
<g transform="rotate(-30 21.6 11.4)">
<rect x="17" y="4.4" width="9.2" height="14.2" rx="3.6" fill="#f9c39c" stroke="#b47c54" stroke-width="1"/>
<rect x="15.8" y="3.4" width="11.6" height="2.4" rx=".8" fill="#b98058"/>
<rect x="15.8" y="17.2" width="11.6" height="2.4" rx=".8" fill="#b98058"/>
</g>
<rect x="16.2" y="27.8" width="14.6" height="3" rx="1.2" fill="#cd946c" stroke="#b47c54" stroke-width=".7"/>
</svg>
<svg class="a" style="left:505.7px;top:55.8px" width="25" height="29" viewBox="0 0 25 29">
<rect x=".4" y=".4" width="23.4" height="27.6" rx="2.2" fill="#82b1ee"/>
<path d="M2.6 .4H4V28H2.6Q.4 28 .4 25.8V2.6Q.4 .4 2.6 .4Z" fill="#5a8ace"/>
<rect x="7" y="6.6" width="12" height="7.4" fill="#fbfdff"/>
<path d="M8.8 9.2H17.2M8.8 11.6H17.2" stroke="#c3d8f2" stroke-width="1"/>
</svg>
<svg class="a" style="left:606.5px;top:53.1px" width="26" height="34" viewBox="0 0 26 34">
<rect x=".8" y="3" width="23.4" height="27.4" fill="#e3a47c" stroke="#bc7e56" stroke-width="1"/>
<rect x="12" y="5.2" width="10" height="24.8" fill="#54444a"/>
<rect x="17.2" y="5.2" width="4.8" height="24.8" fill="#6b595f"/>
<path d="M3.2 4L12 .9V32.7L3.2 30.4Z" fill="#ffc9a2" stroke="#bf8159" stroke-width="1" stroke-linejoin="round"/>
<rect x="7.2" y="17.2" width="1.6" height="1.8" fill="#7a4a30"/>
</svg>
<svg class="a" style="left:655.1px;top:55.8px" width="33" height="30" viewBox="0 0 33 30"><g transform="translate(0 0)">
<path d="M7.8 14V24.2C7.8 27.6 24.2 27.6 24.2 24.2V14Z" fill="#4b4f57"/>
<path d="M16 .8L31.4 11.2L16 21.6L.6 11.2Z" fill="#565a62" stroke="#1f232b" stroke-width="1.2" stroke-linejoin="round"/>
<path d="M16.4 10.9L4.2 14.2V24" fill="none" stroke="#f2a321" stroke-width="1.3" stroke-linejoin="round" stroke-linecap="round"/>
<path d="M4.2 23.2L5.6 26L4.2 28L2.8 26Z" fill="#f2a321"/>
</g></svg>
<svg class="a" style="left:555px;top:53px" width="27" height="32" viewBox="0 0 27 32">
<path d="M1.6 21C.4 12 2.4 1.2 9 1.2C15.6 1.2 16.6 10 16 19L13 21Z" fill="#c37f55"/>
<ellipse cx="8.8" cy="11.6" rx="4.8" ry="6.2" fill="#f8cfa0"/>
<path d="M1 20.4L7 18L12 21V26H1Z" fill="#e8505e"/>
<path d="M9.4 19.6C8.2 9.6 11 3 17.4 3C23.8 3 26 9.6 24.8 19.6Z" fill="#f2cb7c"/>
<path d="M11.6 11C11.6 8.6 23 8.6 23 11V17.4C23 21.4 20 24.6 17.3 24.6C14.6 24.6 11.6 21.4 11.6 17.4Z" fill="#fbdba6" stroke="#e4b878" stroke-width=".6"/>
<path d="M7 32C7 26.6 12 24.6 17.3 24.6C22.6 24.6 27 26.6 27 32Z" fill="#8fb4ea"/>
</svg>
<div class="a" style="left:328px;top:51px;width:150px;height:22px;box-sizing:border-box;border:1px solid #a9b6cc;background:#fff"></div>
<div class="a" style="left:464px;top:52px;width:13px;height:20px;background:linear-gradient(to bottom,#b6c4e6 0,#8ca2d2 46%,#5b78b6 52%,#44639f 100%);border:1px solid #a9b8dc;border-bottom-color:#6d86bd;box-sizing:border-box"></div>
<svg class="a" style="left:466px;top:59px" width="10" height="7"><path d="M1.5 1.5L5 5L8.5 1.5" fill="none" stroke="#fff" stroke-width="1.4"/></svg>
<svg class="a" style="left:332px;top:55px" width="15" height="15" viewBox="0 0 15 15"><rect x=".5" y=".5" width="14" height="14" fill="#f4f7fc" stroke="#9db4d6"/><rect x="1" y="1" width="13" height="3" fill="#a9c6ee"/><path d="M3.5 1v13.5M6.3 1v13.5M9.1 1v13.5M11.9 1v13.5" stroke="#b9c9e2" stroke-width=".8"/></svg>
<span class="t" id="t22" style="left:353.5px;top:55.5px;font-size:11px;line-height:14px;color:#000;font-weight:normal;transform:scaleX(1.0056);-webkit-text-stroke:.1px;">Общее</span>
<div class="a" style="left:328px;top:73px;width:349px;height:454px;box-sizing:border-box;border:1px solid #9a9a9a;border-right-color:#8c8c8c;border-bottom-color:#8c8c8c;border-radius:0 0 3px 3px;background:#fafafa;box-shadow:1px 1px 0 rgba(0,0,0,.25),2px 2px 3px rgba(0,0,0,.4)"></div>
<div class="a" style="left:329px;top:74px;width:331px;height:252px;background:#fff"></div>
<div class="a" style="left:659px;top:74px;width:17px;height:399px;background:linear-gradient(to right,#e6e6e6 0,#efefef 35%,#f5f5f5 100%)"></div>
<svg class="a" style="left:662px;top:80px" width="11" height="7" viewBox="0 0 11 7"><defs><linearGradient id="ag" x1="0" y1="0" x2="0" y2="1"><stop offset="0" stop-color="#c5cbe2"/><stop offset="1" stop-color="#6c7cb0"/></linearGradient></defs><path d="M5.5 .6L10.2 5.8H.8z" fill="url(#ag)"/></svg>
<svg class="a" style="left:662px;top:462px" width="11" height="7" viewBox="0 0 11 7"><defs><linearGradient id="ag2" x1="0" y1="0" x2="0" y2="1"><stop offset="0" stop-color="#6c7cb0"/><stop offset="1" stop-color="#c5cbe2"/></linearGradient></defs><path d="M.8 .8H10.2L5.5 6z" fill="url(#ag2)"/></svg>
<span class="t" id="t23" style="left:371.5px;top:89.3px;font-size:11px;line-height:14px;color:#121270;font-weight:normal;transform:scaleX(1.0222);">Общее</span>
<span class="t" id="t24" style="left:371.5px;top:131.0px;font-size:11px;line-height:14px;color:#121270;font-weight:normal;transform:scaleX(1.0167);">Учителя</span>
<span class="t" id="t25" style="left:371.5px;top:173.0px;font-size:11px;line-height:14px;color:#121270;font-weight:normal;transform:scaleX(1.0340);">Кабинеты</span>
<span class="t" id="t26" style="left:371.5px;top:215.0px;font-size:11px;line-height:14px;color:#121270;font-weight:normal;transform:scaleX(1.0113);">Предметы</span>
<span class="t" id="t27" style="left:371.5px;top:257.0px;font-size:11px;line-height:14px;color:#121270;font-weight:normal;transform:scaleX(1.0387);">Кабинет требует надсмотра</span>
<span class="t" id="t28" style="left:371.5px;top:299.0px;font-size:11px;line-height:14px;color:#121270;font-weight:normal;transform:scaleX(1.0642);">Сетка уроков</span>
<div class="a" style="left:329px;top:473px;width:347px;height:1px;background:#dcdcdc"></div>
<div class="a" style="left:329px;top:474px;width:26px;height:46px;background:#efefef;border-right:1px solid #dedede"></div>
<div class="a" style="left:331px;top:475px;width:345px;height:22px;background:#ffdd74"></div>
<svg class="a" style="left:335.5px;top:478px" width="15" height="15" viewBox="0 0 17 17"><rect x=".5" y=".5" width="11" height="10" fill="#7fc08a" stroke="#5a9a66"/><rect x="1" y="1" width="10" height="3" fill="#4f9160"/><rect x="4.5" y="5.5" width="12" height="10" fill="#cfe0f7" stroke="#8fb0e0"/><rect x="5" y="6" width="11" height="3" fill="#8fb4ea"/><path d="M10.5 9v6.5" stroke="#8fb0e0"/></svg>
<span class="t" id="t29" style="left:364.0px;top:479.4px;font-size:11px;line-height:14px;color:#121270;font-weight:normal;transform:scaleX(1.0661);">Определить просмотры</span>
<span class="t" id="t30" style="left:364.0px;top:501.5px;font-size:11px;line-height:14px;color:#121270;font-weight:normal;transform:scaleX(1.0644);">Изменить просмотр</span>
<div class="a" style="left:329px;top:520px;width:347px;height:6px;background:linear-gradient(to bottom,#fafafa 0,#e6e6e6 45%,#c9c9c9 100%);border-radius:0 0 3px 3px"></div>
<div class="a" style="left:495px;top:522px;width:2px;height:2px;background:#8c8c98"></div>
<div class="a" style="left:499.5px;top:522px;width:2px;height:2px;background:#8c8c98"></div>
<div class="a" style="left:504px;top:522px;width:2px;height:2px;background:#8c8c98"></div>
<div class="a" style="left:508.5px;top:522px;width:2px;height:2px;background:#8c8c98"></div>
<svg class="a" style="left:325px;top:463px" width="345" height="44" viewBox="0 0 345 44"><path d="M12 7.5 C80 6.6,230 6.2,332 7.2 Q337.5 7.4,337.6 13 L337.4 32 Q337.2 37.2,331 37.2 C300 37.5,260 37,232 37.4 L230 35.9 C160 36.2,60 36.5,13.6 36.2 Q9.2 36,9.2 31 L9.4 12 Q9 7.6,12 7.5" fill="none" stroke="#e8232d" stroke-width="3.6" stroke-linejoin="round" stroke-linecap="round"/></svg>
<svg class="a" style="left:335px;top:81.8px" width="28" height="28" viewBox="0 0 29 29">
<rect x=".7" y=".7" width="27.6" height="27.6" fill="#f6f9fd" stroke="#a3b8d8" stroke-width="1"/>
<rect x="1.2" y="1.2" width="26.6" height="6" fill="#b3d2f5"/>
<rect x="6.2" y="7.2" width="5.4" height="20.6" fill="#e9eff7"/><rect x="17.6" y="7.2" width="5.4" height="20.6" fill="#e9eff7"/>
<path d="M1.2 7.4H27.8" stroke="#a9c3e6" stroke-width=".8"/>
<path d="M6.2 1.2V27.8M11.8 1.2V27.8M17.5 1.2V27.8M23 1.2V27.8" stroke="#a9bddb" stroke-width=".9"/>
</svg>
<svg class="a" style="left:332.8px;top:123.7px" width="33" height="30" viewBox="0 0 33 30"><g transform="translate(0 0)">
<path d="M7.8 14V24.2C7.8 27.6 24.2 27.6 24.2 24.2V14Z" fill="#4b4f57"/>
<path d="M16 .8L31.4 11.2L16 21.6L.6 11.2Z" fill="#565a62" stroke="#1f232b" stroke-width="1.2" stroke-linejoin="round"/>
<path d="M16.4 10.9L4.2 14.2V24" fill="none" stroke="#f2a321" stroke-width="1.3" stroke-linejoin="round" stroke-linecap="round"/>
<path d="M4.2 23.2L5.6 26L4.2 28L2.8 26Z" fill="#f2a321"/>
</g></svg>
<svg class="a" style="left:337.7px;top:162.9px" width="26" height="34" viewBox="0 0 26 34">
<rect x=".8" y="3" width="23.4" height="27.4" fill="#e3a47c" stroke="#bc7e56" stroke-width="1"/>
<rect x="12" y="5.2" width="10" height="24.8" fill="#54444a"/>
<rect x="17.2" y="5.2" width="4.8" height="24.8" fill="#6b595f"/>
<path d="M3.2 4L12 .9V32.7L3.2 30.4Z" fill="#ffc9a2" stroke="#bf8159" stroke-width="1" stroke-linejoin="round"/>
<rect x="7.2" y="17.2" width="1.6" height="1.8" fill="#7a4a30"/>
</svg>
<svg class="a" style="left:337px;top:207.8px" width="25" height="29" viewBox="0 0 25 29">
<rect x=".4" y=".4" width="23.4" height="27.6" rx="2.2" fill="#82b1ee"/>
<path d="M2.6 .4H4V28H2.6Q.4 28 .4 25.8V2.6Q.4 .4 2.6 .4Z" fill="#5a8ace"/>
<rect x="7" y="6.6" width="12" height="7.4" fill="#fbfdff"/>
<path d="M8.8 9.2H17.2M8.8 11.6H17.2" stroke="#c3d8f2" stroke-width="1"/>
</svg>
<svg class="a" style="left:334px;top:248px" width="30" height="31" viewBox="0 0 30 31">
<path d="M6.8 15.5C5.8 21 4.4 25.6 1 27.2C4 29 8.6 28.4 10.4 26.6L10 15.5Z" fill="#a8683e"/>
<path d="M23.2 15.5C24.2 21 25.6 25.6 29 27.2C26 29 21.4 28.4 19.6 26.6L20 15.5Z" fill="#a8683e"/>
<path d="M7.4 15.8H22.6V21.6C22.6 26 18.4 30.4 15 30.4C11.6 30.4 7.4 26 7.4 21.6Z" fill="#f6cd72" stroke="#d0a050" stroke-width=".6"/>
<circle cx="11.6" cy="19" r=".9" fill="#4a4a6a"/><circle cx="18.4" cy="19" r=".9" fill="#4a4a6a"/>
<path d="M15 .9L28.8 6.4L24.4 11.8H5.6L1.2 6.4Z" fill="#6f9fde" stroke="#4b7ac4" stroke-width=".9" stroke-linejoin="round"/>
<rect x="5.4" y="11.6" width="19.2" height="3.2" fill="#8a9bb3"/>
<path d="M5.4 14.6H24.6L23.4 17.4C18 16.4 12 16.4 6.6 17.4Z" fill="#4d6d9e"/>
<rect x="13.2" y="5" width="3.6" height="4.2" rx=".8" fill="#f8d961"/>
</svg>
<svg class="a" style="left:334.9px;top:294.8px" width="29" height="22" viewBox="0 0 29 22"><rect x="0.6" y="0.6" width="5" height="5" rx="1.4" fill="#a6d8b1" stroke="#7cb78d" stroke-width=".9"/><rect x="8.0" y="0.6" width="5" height="5" rx="1.4" fill="#a6d8b1" stroke="#7cb78d" stroke-width=".9"/><rect x="15.4" y="0.6" width="5" height="5" rx="1.4" fill="#a6d8b1" stroke="#7cb78d" stroke-width=".9"/><rect x="22.8" y="0.6" width="5" height="5" rx="1.4" fill="#a6d8b1" stroke="#7cb78d" stroke-width=".9"/><rect x="0.6" y="7.9" width="5" height="5" rx="1.4" fill="#a6d8b1" stroke="#7cb78d" stroke-width=".9"/><rect x="8.0" y="7.9" width="5" height="5" rx="1.4" fill="#a6d8b1" stroke="#7cb78d" stroke-width=".9"/><rect x="15.4" y="7.9" width="5" height="5" rx="1.4" fill="#a6d8b1" stroke="#7cb78d" stroke-width=".9"/><rect x="22.8" y="7.9" width="5" height="5" rx="1.4" fill="#a6d8b1" stroke="#7cb78d" stroke-width=".9"/><rect x="0.6" y="15.2" width="5" height="5" rx="1.4" fill="#a6d8b1" stroke="#7cb78d" stroke-width=".9"/><rect x="8.0" y="15.2" width="5" height="5" rx="1.4" fill="#a6d8b1" stroke="#7cb78d" stroke-width=".9"/><rect x="15.4" y="15.2" width="5" height="5" rx="1.4" fill="#a6d8b1" stroke="#7cb78d" stroke-width=".9"/><rect x="22.8" y="15.2" width="5" height="5" rx="1.4" fill="#a6d8b1" stroke="#7cb78d" stroke-width=".9"/></svg>
<div class="a" style="left:691px;top:284px;width:309px;height:315px;box-sizing:border-box;background:#f0f0f0;border:1px solid #2f86d6;border-right-color:#f0f0f0;border-bottom-color:#e4e4e4;box-shadow:0 0 2px rgba(0,0,0,.25)"></div>
<div class="a" style="left:692px;top:285px;width:308px;height:25px;background:#fff"></div>
<span class="t" id="t31" style="left:695.8px;top:289.2px;font-size:12px;line-height:16px;color:#000;font-weight:normal;transform:scaleX(0.9977);-webkit-text-stroke:0;">Определить просмотры</span>
<svg class="a" style="left:978px;top:290px" width="14" height="14" viewBox="0 0 14 14"><path d="M2 2L12 12M12 2L2 12" stroke="#1a1a1a" stroke-width="1.1" fill="none"/></svg>
<span class="t" id="t32" style="left:702.6px;top:321.2px;font-size:10.5px;line-height:14px;color:#000;font-weight:normal;transform:scaleX(1.0224);-webkit-text-stroke:0;">Просмотры:</span>
<div class="a" style="left:703px;top:344px;width:185px;height:190px;box-sizing:border-box;border:1px solid #828790;background:#fff"></div>
<div class="a" style="left:705px;top:359px;width:181px;height:13px;background:#0a74d8"></div>
<span class="t" id="t33" style="left:705.8px;top:346.3px;font-size:10.5px;line-height:14px;color:#000;font-weight:normal;transform:scaleX(1.0000);-webkit-text-stroke:0;">Master</span>
<span class="t" id="t34" style="left:705.8px;top:359.3px;font-size:10.5px;line-height:14px;color:#fff;font-weight:normal;transform:scaleX(1.0353);-webkit-text-stroke:0;">Общее</span>
<span class="t" id="t35" style="left:705.8px;top:372.3px;font-size:10.5px;line-height:14px;color:#000;font-weight:normal;transform:scaleX(1.0700);-webkit-text-stroke:0;">Учителя</span>
<span class="t" id="t36" style="left:705.8px;top:385.3px;font-size:10.5px;line-height:14px;color:#000;font-weight:normal;transform:scaleX(1.0915);-webkit-text-stroke:0;">Кабинеты</span>
<span class="t" id="t37" style="left:705.8px;top:398.3px;font-size:10.5px;line-height:14px;color:#000;font-weight:normal;transform:scaleX(1.0360);-webkit-text-stroke:0;">Предметы</span>
<span class="t" id="t38" style="left:705.8px;top:411.3px;font-size:10.5px;line-height:14px;color:#000;font-weight:normal;transform:scaleX(1.0800);-webkit-text-stroke:0;">Ученики</span>
<span class="t" id="t39" style="left:705.8px;top:424.3px;font-size:10.5px;line-height:14px;color:#000;font-weight:normal;transform:scaleX(1.0720);-webkit-text-stroke:0;">Ученики, для которых уроки еще н</span>
<span class="t" id="t40" style="left:705.8px;top:437.3px;font-size:10.5px;line-height:14px;color:#000;font-weight:normal;transform:scaleX(1.0676);-webkit-text-stroke:0;">Кабинет требует надсмотра</span>
<span class="t" id="t41" style="left:705.8px;top:450.3px;font-size:10.5px;line-height:14px;color:#000;font-weight:normal;transform:scaleX(1.0906);-webkit-text-stroke:0;">Сетка уроков</span>
<div class="btn" style="left:900px;top:345px;width:88px;height:22px"></div>
<span class="t" id="t42" style="left:926.0px;top:349.0px;font-size:10.7px;line-height:14px;color:#000;font-weight:normal;transform:scaleX(1.0212);-webkit-text-stroke:0;">Новый</span>
<div class="btn" style="left:900px;top:378px;width:88px;height:22px"></div>
<span class="t" id="t43" style="left:916.0px;top:382.0px;font-size:10.7px;line-height:14px;color:#000;font-weight:normal;transform:scaleX(1.0132);-webkit-text-stroke:0;">Исправить</span>
<div class="btn" style="left:900px;top:410px;width:88px;height:22px"></div>
<span class="t" id="t44" style="left:922.0px;top:414.0px;font-size:10.7px;line-height:14px;color:#000;font-weight:normal;transform:scaleX(1.0585);-webkit-text-stroke:0;">Удалить</span>
<div class="btn" style="left:900px;top:470px;width:88px;height:22px"></div>
<span class="t" id="t45" style="left:909.0px;top:474.0px;font-size:10.7px;line-height:14px;color:#000;font-weight:normal;transform:scaleX(1.0578);-webkit-text-stroke:0;">Сортировать</span>
<div class="btn" style="left:915px;top:566px;width:73px;height:21px;border:2px solid #0a78d7"></div>
<span class="t" id="t46" style="left:943.6px;top:569.5px;font-size:10.7px;line-height:14px;color:#000;font-weight:normal;transform:scaleX(0.9933);-webkit-text-stroke:0;">OK</span>
<svg class="a" style="left:690px;top:343px" width="210" height="136" viewBox="0 0 210 136"><g fill="none" stroke="#e8232d" stroke-linejoin="round" stroke-linecap="round"><path d="M10.5 9.6 C50 8.3,150 8.6,193 9.4" stroke-width="2.7"/><path d="M193 9.4 Q198.2 9.8,198.6 16 C199 50,200.3 90,199.4 120.4 Q199 126.4,193 126.6" stroke-width="4"/><path d="M193 126.6 C175 127,150 126.4,139 126.9 L137 125.3 C100 125.6,40 125.8,14 125.4 Q8.6 125,8.3 119" stroke-width="3.8"/><path d="M8.3 119 C7.5 90,8.2 50,8.8 24 Q9 16,9.8 13" stroke-width="3.2"/></g></svg>
</body></html>
